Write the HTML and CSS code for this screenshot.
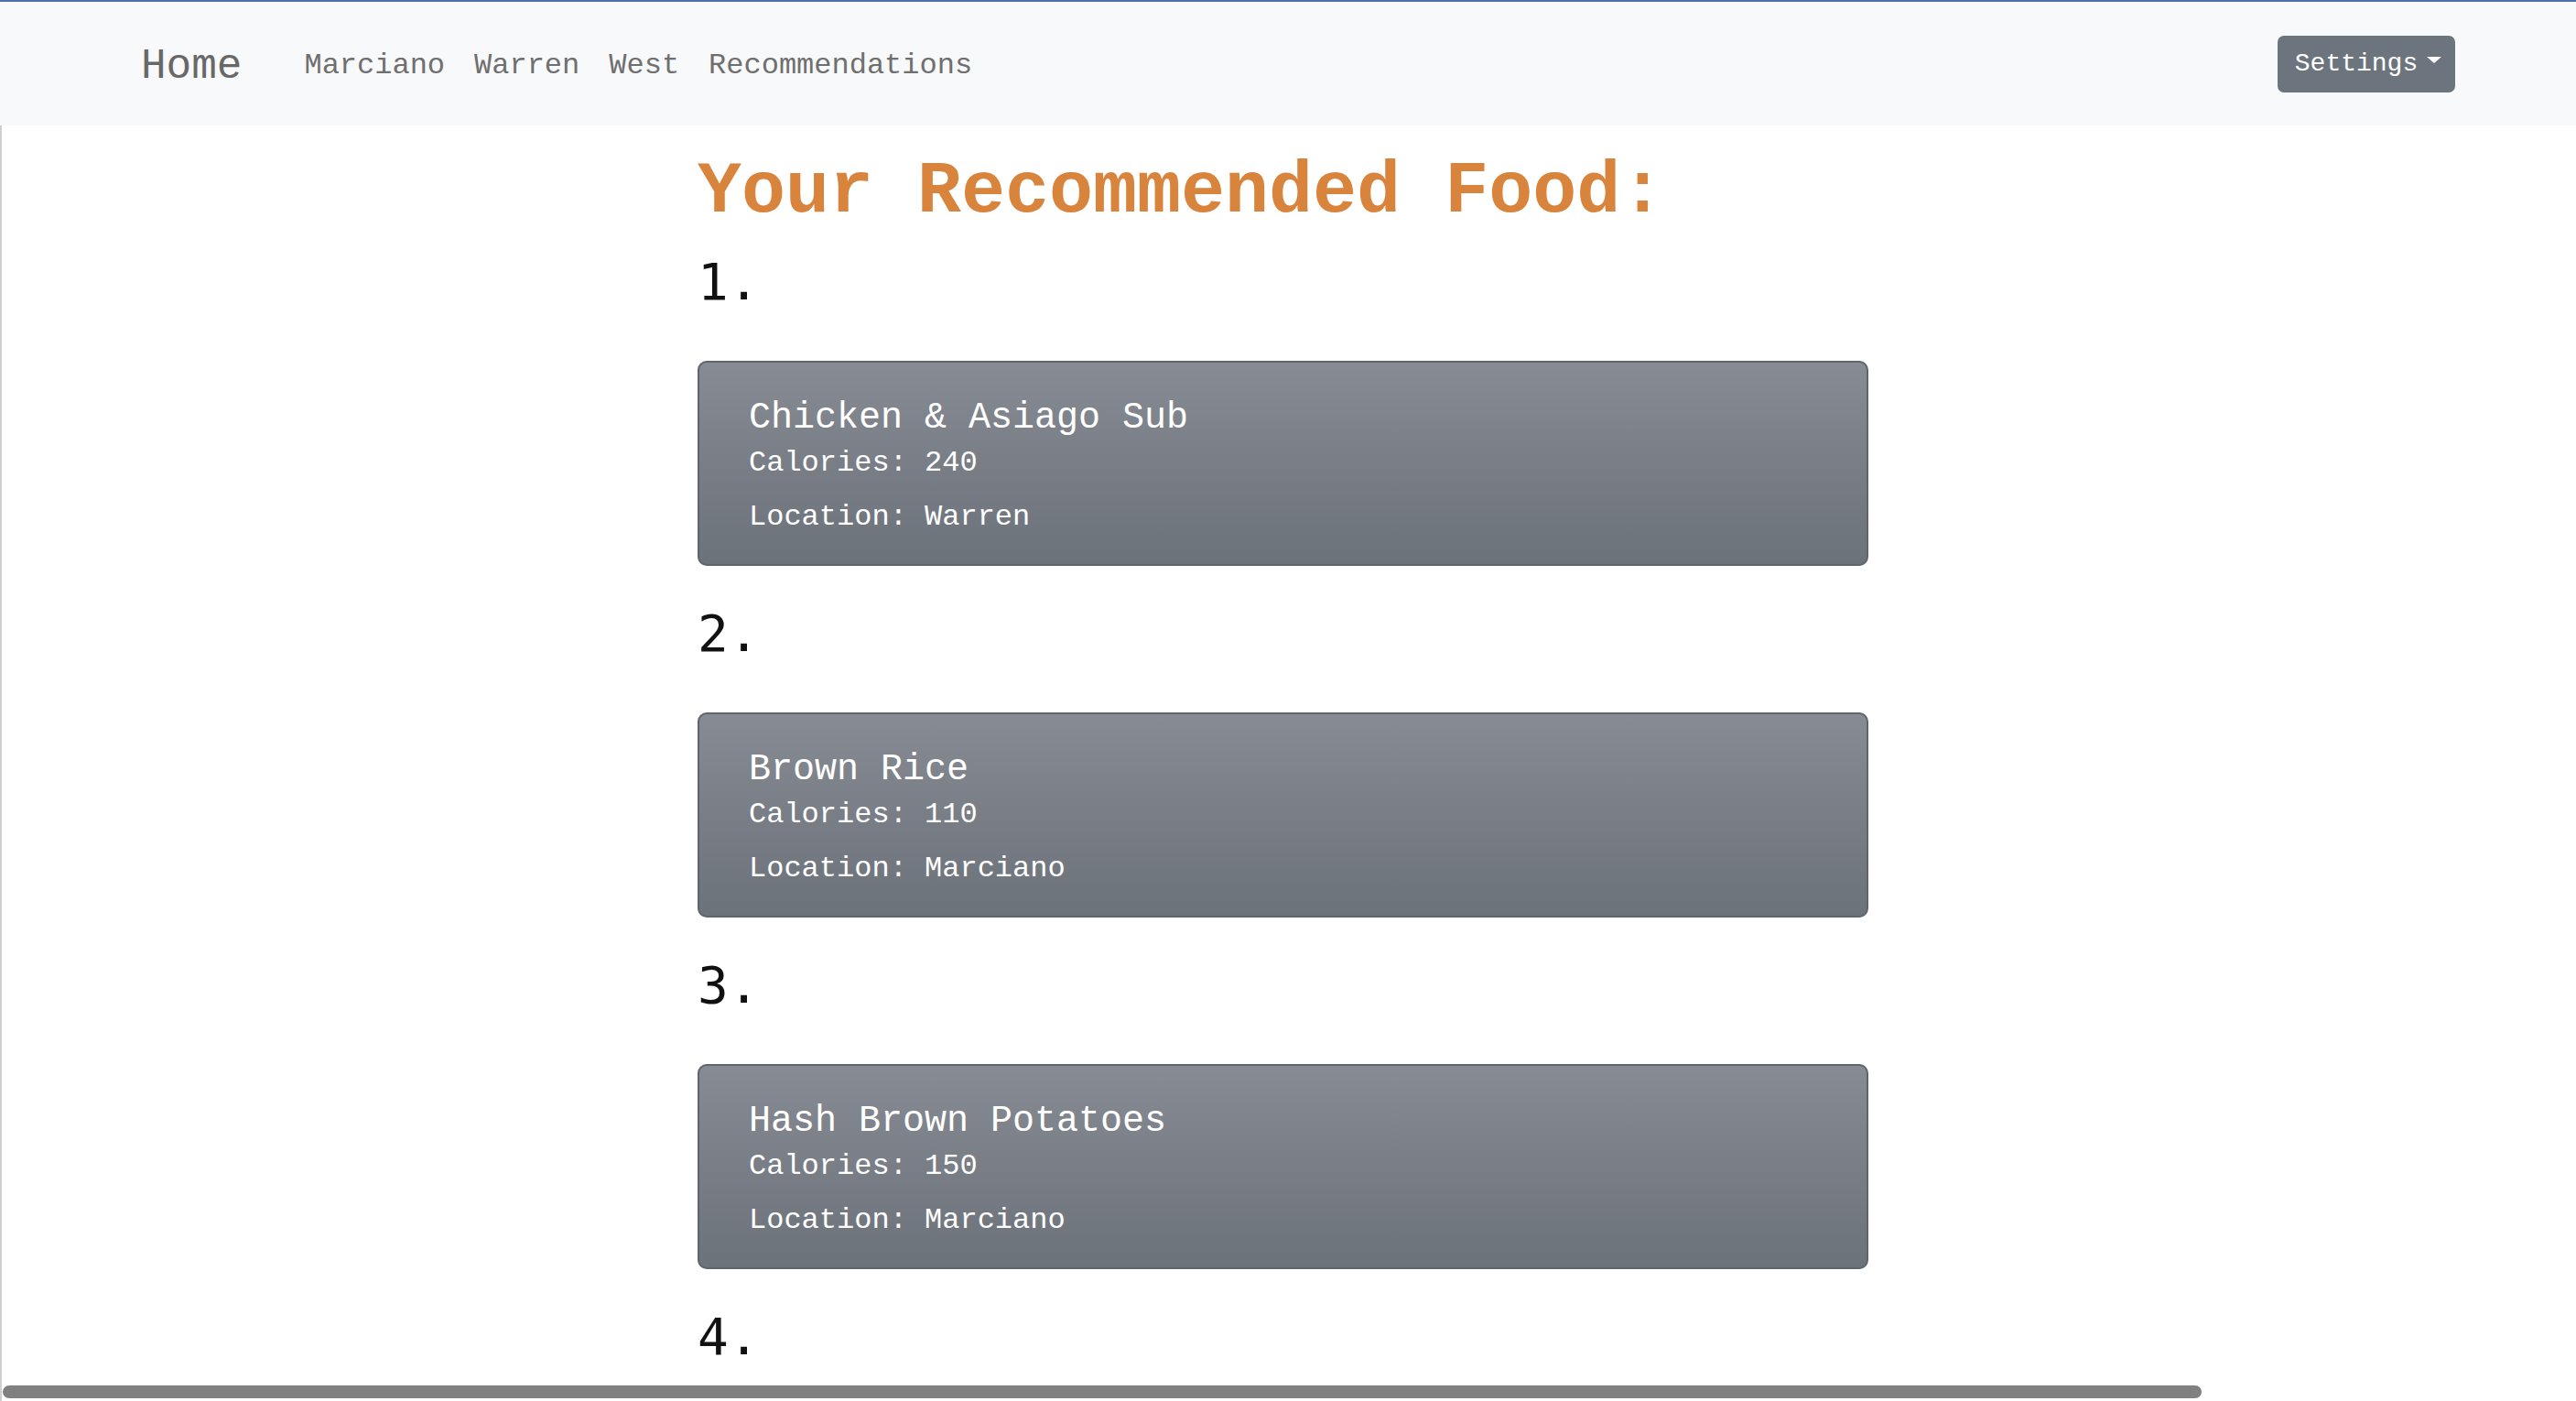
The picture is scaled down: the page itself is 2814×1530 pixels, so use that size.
FILE: index.html
```html
<!DOCTYPE html>
<html lang="en">
<head>
<meta charset="utf-8">
<title>Your Recommended Food</title>
<link rel="stylesheet" href="styles.css">
</head>
<body>
<nav class="navbar">
  <a class="brand" href="#">Home</a>
  <ul class="nav-links">
    <li><a href="#">Marciano</a></li>
    <li><a href="#">Warren</a></li>
    <li><a href="#">West</a></li>
    <li><a href="#">Recommendations</a></li>
  </ul>
  <button class="settings" type="button">Settings<span class="caret"></span></button>
</nav>
<main class="main">
  <div class="container">
    <h1 class="title">Your Recommended Food:</h1>
    <section class="rec">
      <h3 class="rank">1.</h3>
      <div class="card">
        <h5 class="card-title">Chicken &amp; Asiago Sub</h5>
        <p class="card-line">Calories: 240</p>
        <p class="card-line loc">Location: Warren</p>
      </div>
    </section>
    <section class="rec">
      <h3 class="rank">2.</h3>
      <div class="card">
        <h5 class="card-title">Brown Rice</h5>
        <p class="card-line">Calories: 110</p>
        <p class="card-line loc">Location: Marciano</p>
      </div>
    </section>
    <section class="rec">
      <h3 class="rank">3.</h3>
      <div class="card">
        <h5 class="card-title">Hash Brown Potatoes</h5>
        <p class="card-line">Calories: 150</p>
        <p class="card-line loc">Location: Marciano</p>
      </div>
    </section>
    <section class="rec">
      <h3 class="rank">4.</h3>
    </section>
  </div>
</main>
<div class="hscroll"></div>
</body>
</html>
```
FILE: styles.css
```css
html, body {
  margin: 0;
  padding: 0;
  height: 100%;
  overflow: hidden;
  background: #ffffff;
}
body {
  font-family: "Courier New", "Nimbus Mono PS", "Nimbus Mono L", "FreeMono", "Courier", "Liberation Mono", monospace;
}
.navbar {
  box-sizing: border-box;
  height: 137px;
  border-top: 2px solid #4c71a8;
  background: #f8f9fa;
  display: flex;
  align-items: center;
  padding: 0 132px 0 154px;
}
.brand {
  font-size: 46px;
  color: #686868;
  text-decoration: none;
  line-height: 1;
  margin-right: 52px;
  padding-top: 7px;
}
.nav-links {
  list-style: none;
  display: flex;
  margin: 0;
  padding: 5px 0 0 0;
  flex: 1;
}
.nav-links a {
  display: block;
  font-size: 32px;
  color: #6f6f6f;
  text-decoration: none;
  padding: 0 16px;
  line-height: 1;
}
.settings {
  box-sizing: border-box;
  width: 194px;
  height: 62px;
  background: #6c757d;
  border: 0;
  border-radius: 7px;
  color: #ffffff;
  font-family: "Courier New", "Nimbus Mono PS", "Nimbus Mono L", "FreeMono", "Courier", "Liberation Mono", monospace;
  font-size: 28px;
  padding: 0 0 0 4px;
  display: flex;
  align-items: center;
  justify-content: center;
}
.caret {
  display: inline-block;
  width: 0;
  height: 0;
  margin-left: 10px;
  margin-bottom: 8px;
  border-left: 8px solid transparent;
  border-right: 8px solid transparent;
  border-top: 7px solid #ffffff;
}
.main {
  box-sizing: border-box;
  min-height: calc(100% - 137px);
  border-left: 2px solid #cfcfcf;
  padding-top: 25px;
}
.container {
  width: 1279px;
  margin-left: calc(50% - 646px);
}
.title {
  margin: 0 0 16px 0;
  font-size: 80px;
  line-height: 96px;
  font-weight: bold;
  color: #d8843c;
}
.rank {
  margin: 0 0 53px 0;
  font-family: "DejaVu Sans Mono", monospace;
  font-size: 56px;
  line-height: 67px;
  font-weight: normal;
  color: #111111;
}
.card {
  box-sizing: border-box;
  height: 224px;
  margin-bottom: 40px;
  border: 2px solid #5f656c;
  border-radius: 10px;
  background: linear-gradient(to bottom, #878b93, #6c727a);
  padding: 37px 40px 27px 54px;
  color: #ffffff;
}
.card-title {
  margin: 0 0 1px 0;
  font-size: 40px;
  line-height: 48px;
  font-weight: normal;
}
.card-line {
  margin: 0 0 11px 0;
  font-size: 32px;
  line-height: 48px;
}
.card-line.loc {
  margin-bottom: 0;
}
.hscroll {
  position: fixed;
  left: 3px;
  bottom: 3px;
  width: 2402px;
  height: 14px;
  border-radius: 7px;
  background: #808080;
}
```
